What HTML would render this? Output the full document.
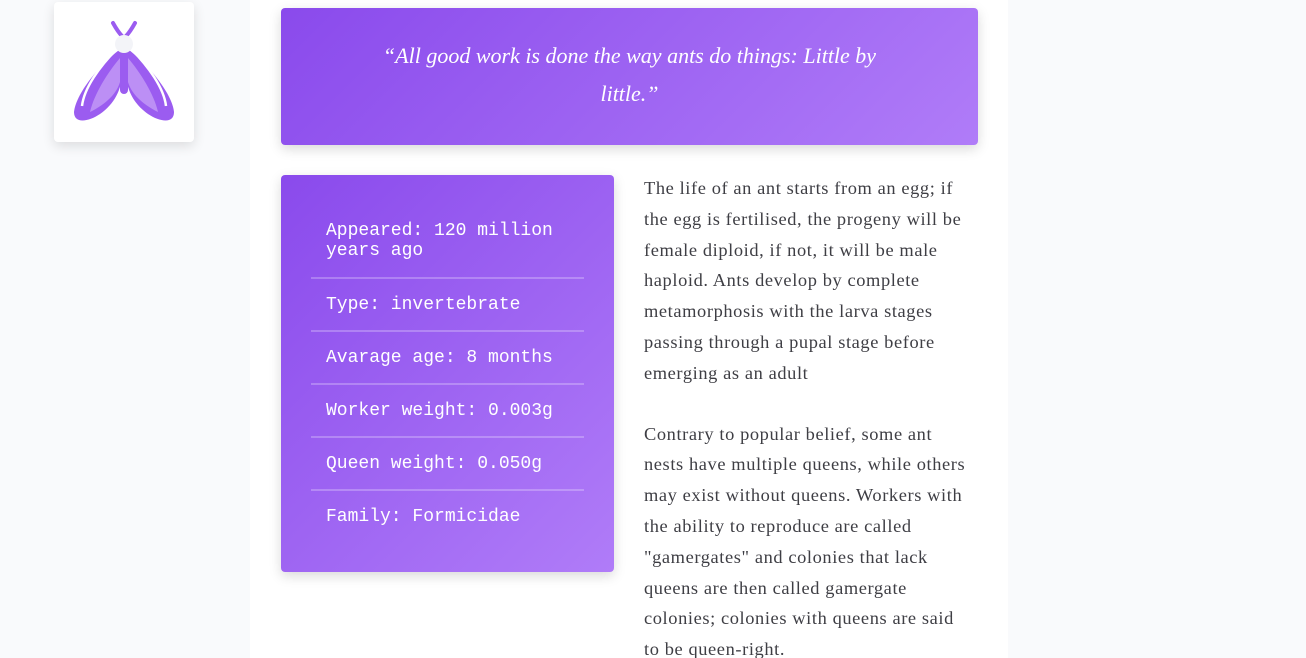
<!DOCTYPE html>
<html><head><meta charset="utf-8"><style>
*{margin:0;padding:0;box-sizing:border-box}
html,body{width:1306px;height:658px;overflow:hidden;background:#f9fafc}
.wrap{position:absolute;left:0;top:0;width:1306px;height:658px;overflow:hidden}
.main{position:absolute;left:250px;top:0;width:758px;height:658px;background:#fff}
.logo{position:absolute;left:54px;top:2px;width:140px;height:140px;background:#fff;border-radius:4px;box-shadow:0 4px 12px rgba(0,0,0,.12)}
.quote{position:absolute;left:281px;top:8px;width:697px;height:137px;border-radius:4px;background:linear-gradient(135deg,#8a4aec,#b07cf8);box-shadow:0 4px 12px rgba(0,0,0,.15);color:#fff;font-family:"Liberation Serif",serif;font-style:italic;font-size:22px;line-height:38px;text-align:center;padding:29px 100px 0}
.info{position:absolute;left:281px;top:175px;width:333px;height:397px;border-radius:4px;background:linear-gradient(135deg,#8a4aec,#b07cf8);box-shadow:0 4px 12px rgba(0,0,0,.15);padding:44px 30px 0}
.info div{font-family:"Liberation Mono",monospace;color:#fff;font-size:18px;line-height:20px;padding:0 15px;height:53px;padding-top:16px;border-bottom:2px solid rgba(255,255,255,.25)}
.info div:first-child{height:60px;padding-top:2px}
.info div:last-child{border:none}
.text{position:absolute;left:644px;top:173px;width:360px;height:485px;overflow:hidden;font-family:"Liberation Serif",serif;font-size:18.4px;line-height:30.8px;color:#3e3e44;white-space:nowrap;letter-spacing:0.6px}
.text p{margin-bottom:30px}
</style></head><body>
<div class="wrap">
<div class="main"></div>
<div class="logo"><svg width="140" height="140" viewBox="0 0 140 140">
<path d="M59 21 Q64 30 68 34 M81 21 Q76 30 72 34" stroke="#9b5cf0" stroke-width="4" fill="none" stroke-linecap="round"/>
<path d="M68 46 C50 58 22 90 20 110 C20 122 34 120 46 112 C60 102 68 88 68 70Z" fill="#9b5cf0"/>
<path d="M72 46 C90 58 118 90 120 110 C120 122 106 120 94 112 C80 102 72 88 72 70Z" fill="#9b5cf0"/>
<path d="M66 56 C54 70 40 92 36 110 C48 104 62 94 66 80Z" fill="#bc8ff5"/>
<path d="M74 56 C86 70 100 92 104 110 C92 104 78 94 74 80Z" fill="#bc8ff5"/>
<path d="M62 48 C46 64 30 86 28 104" stroke="#fff" stroke-width="2.5" fill="none"/>
<path d="M78 48 C94 64 110 86 112 104" stroke="#fff" stroke-width="2.5" fill="none"/>
<rect x="66" y="46" width="8" height="46" rx="4" fill="#9b5cf0"/>
<circle cx="70" cy="42" r="9" fill="#f3f4f8"/>
</svg></div>
<div class="quote">“All good work is done the way ants do things: Little by little.”</div>
<div class="info">
<div>Appeared: 120 million years ago</div>
<div>Type: invertebrate</div>
<div>Avarage age: 8 months</div>
<div>Worker weight: 0.003g</div>
<div>Queen weight: 0.050g</div>
<div>Family: Formicidae</div>
</div>
<div class="text">
<p>The life of an ant starts from an egg; if<br>the egg is fertilised, the progeny will be<br>female diploid, if not, it will be male<br>haploid. Ants develop by complete<br>metamorphosis with the larva stages<br>passing through a pupal stage before<br>emerging as an adult</p>
<p>Contrary to popular belief, some ant<br>nests have multiple queens, while others<br>may exist without queens. Workers with<br>the ability to reproduce are called<br>"gamergates" and colonies that lack<br>queens are then called gamergate<br>colonies; colonies with queens are said<br>to be queen-right.</p>
</div>
</div>
</body></html>
